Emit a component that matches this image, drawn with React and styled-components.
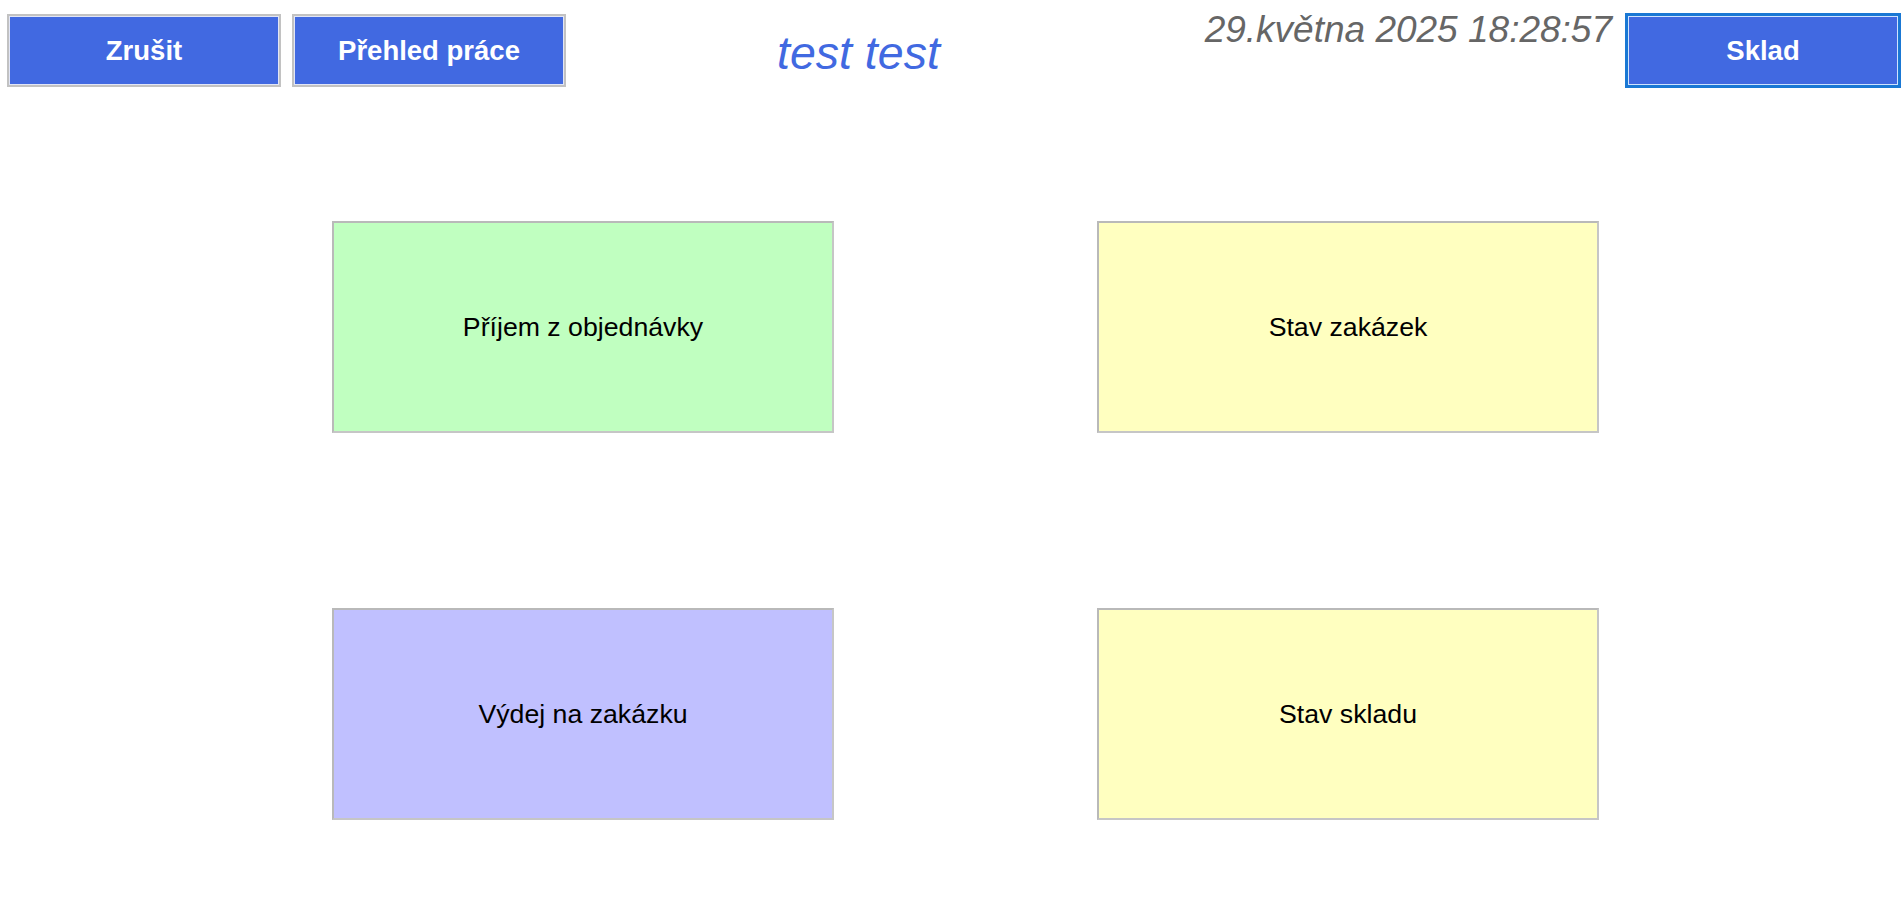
import React from 'react';
import styled, { createGlobalStyle } from 'styled-components';

const GlobalStyle = createGlobalStyle`
  html, body {
    margin: 0;
    padding: 0;
    background: #ffffff;
    font-family: "Liberation Sans", Arial, sans-serif;
  }
`;

const Page = styled.div`
  width: 1904px;
  height: 914px;
  overflow: hidden;
`;

const Header = styled.div`
  display: flex;
  align-items: flex-start;
  padding: 14px 4px 0 7px;
`;

const ButtonGroup = styled.div`
  display: flex;
  gap: 11px;
`;

const TopButton = styled.button`
  width: 274px;
  height: 73px;
  background-color: #4169e1;
  color: #ffffff;
  font-family: "Liberation Sans", Arial, sans-serif;
  font-weight: bold;
  font-size: 27.5px;
  border: 2px solid ${({ $active }) => ($active ? '#1a78d4' : '#c2c2c2')};
  box-shadow: inset 0 0 0 1px ${({ $active }) => ($active ? '#cfe3ff' : '#e2e6f6')};
  outline: ${({ $active }) => ($active ? '1px solid #1a78d4' : 'none')};
  padding: 0;
  cursor: pointer;
`;

const Title = styled.div`
  margin-left: 211px;
  margin-top: 14px;
  color: #4169e1;
  font-style: italic;
  font-size: 46.5px;
  line-height: 50px;
`;

const Spacer = styled.div`
  flex: 1;
`;

const DateTime = styled.div`
  margin-right: 14px;
  margin-top: -5px;
  color: #666666;
  font-style: italic;
  font-size: 37px;
  line-height: 42px;
`;

const Grid = styled.div`
  display: grid;
  grid-template-columns: 502px 502px;
  grid-auto-rows: 212px;
  column-gap: 263px;
  row-gap: 175px;
  padding: 134px 0 0 332px;
`;

const Tile = styled.button`
  background-color: ${({ $bg }) => $bg};
  border: 2px solid #c6c6c6;
  border-top-color: #b9b9b9;
  border-left-color: #b9b9b9;
  color: #000000;
  font-family: "Liberation Sans", Arial, sans-serif;
  font-size: 26.7px;
  padding: 0;
  cursor: pointer;
  display: flex;
  align-items: center;
  justify-content: center;
`;

const tiles = [
  { label: 'Příjem z objednávky', bg: '#c0ffc0' },
  { label: 'Stav zakázek', bg: '#ffffc0' },
  { label: 'Výdej na zakázku', bg: '#c0c0ff' },
  { label: 'Stav skladu', bg: '#ffffc0' },
];

export default function App() {
  return (
    <Page>
      <GlobalStyle />
      <Header>
        <ButtonGroup>
          <TopButton>Zrušit</TopButton>
          <TopButton>Přehled práce</TopButton>
        </ButtonGroup>
        <Title>test test</Title>
        <Spacer />
        <DateTime>29.května 2025 18:28:57</DateTime>
        <TopButton $active>Sklad</TopButton>
      </Header>
      <Grid>
        {tiles.map((t) => (
          <Tile key={t.label} $bg={t.bg}>
            {t.label}
          </Tile>
        ))}
      </Grid>
    </Page>
  );
}
